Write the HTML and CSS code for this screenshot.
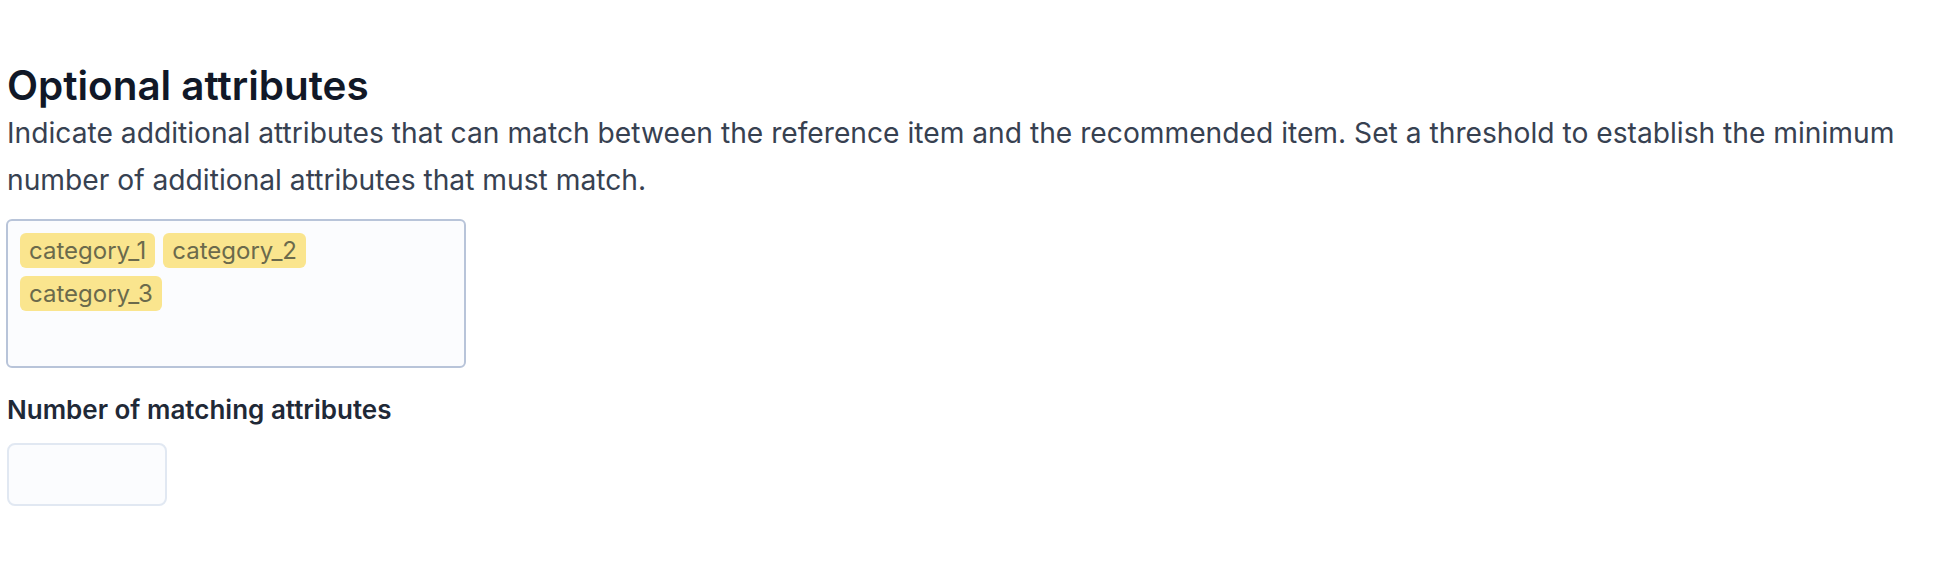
FILE: index.html
```html
<!DOCTYPE html>
<html lang="en">
<head>
<meta charset="UTF-8">
<meta name="viewport" content="width=device-width, initial-scale=1.0">
<title>Optional attributes</title>
<link rel="stylesheet" href="styles.css">
</head>
<body>

<div class="section">
    <h2 class="section-title">Optional attributes</h2>
    <p class="section-desc">Indicate additional attributes that can match between the reference item and the recommended item. Set a threshold to establish the minimum number of additional attributes that must match.</p>

    <div class="tag-box">
        <span class="tag">category_1</span>
        <span class="tag">category_2</span>
        <span class="tag">category_3</span>
    </div>

    <label class="field-label" for="matchCount">Number of matching attributes</label>
    <input class="number-input" type="text" id="matchCount">
</div>

</body>
</html>
```

FILE: styles.css
```css
body {
    font-family: Inter, 'Noto Sans', sans-serif;
    margin: 0;
    padding: 0;
    background-color: #fff;
}
.section {
    padding: 62px 7px 0 7px;
}
.section-title {
    font-size: 40.4px;
    line-height: 48px;
    font-weight: 600;
    color: #111827;
    margin: 0;
}
.section-desc {
    font-size: 28.2px;
    line-height: 47px;
    color: #374151;
    margin: 0 0 15px 0;
}
.tag-box {
    width: 460px;
    height: 149px;
    box-sizing: border-box;
    border: 2px solid #b8c4d9;
    border-radius: 6px;
    background-color: #fbfcfe;
    padding: 12px;
    display: flex;
    flex-wrap: wrap;
    align-content: flex-start;
    gap: 8px;
    margin-left: -1px;
}
.tag {
    font-size: 24px;
    line-height: 35px;
    padding: 0 9px;
    background-color: #fae58e;
    color: #6b6a4c;
    border-radius: 6px;
}
.field-label {
    display: block;
    font-size: 26px;
    line-height: 32px;
    font-weight: 600;
    color: #1f2937;
    margin: 26px 0 17px 0;
}
.number-input {
    display: block;
    width: 160px;
    height: 63px;
    box-sizing: border-box;
    border: 2px solid #e1e8f2;
    border-radius: 8px;
    background-color: #fbfcfe;
    outline: none;
}
```
